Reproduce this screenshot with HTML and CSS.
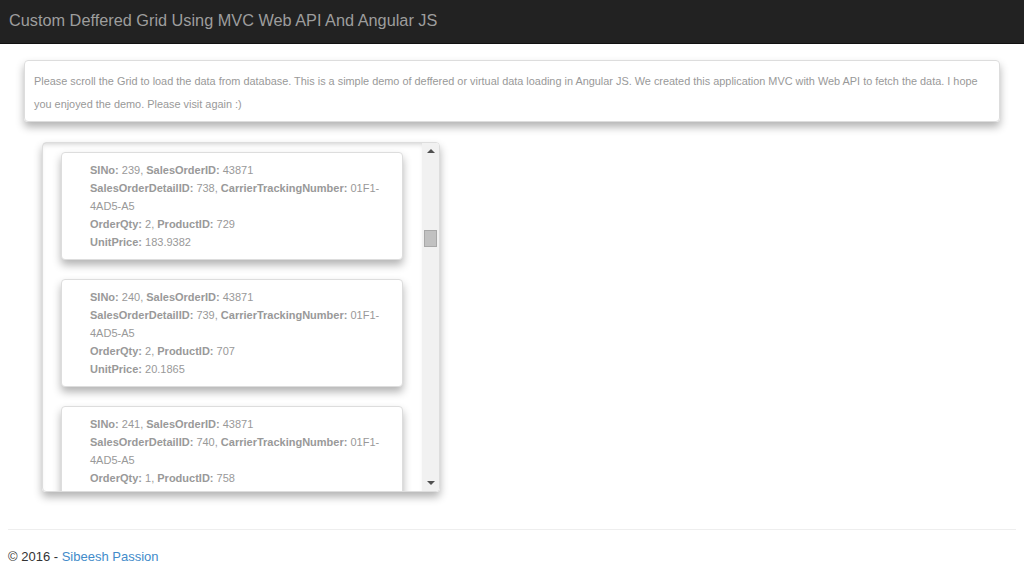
FILE: index.html
```html
<!DOCTYPE html>
<html>
  <head>
    <title>Custom Deffered Grid</title>
    <link rel="stylesheet" href="styles.css">
  </head>
  <body>
    <div class="navbar">
      <span class="brand">Custom Deffered Grid Using MVC Web API And Angular JS</span>
    </div>

    <div class="page">
      <div class="intro">
        Please scroll the Grid to load the data from database. This is a simple demo of deffered or virtual data loading in Angular JS. We created this application MVC with Web API to fetch the data. I hope you enjoyed the demo. Please visit again :)
      </div>

      <div class="grid">
        <div class="grid-rows">
          <div class="row-card">
            <p><b>SINo:</b> 239, <b>SalesOrderID:</b> 43871</p>
            <p><b>SalesOrderDetailID:</b> 738, <b>CarrierTrackingNumber:</b> 01F1-4AD5-A5</p>
            <p><b>OrderQty:</b> 2, <b>ProductID:</b> 729</p>
            <p><b>UnitPrice:</b> 183.9382</p>
          </div>
          <div class="row-card">
            <p><b>SINo:</b> 240, <b>SalesOrderID:</b> 43871</p>
            <p><b>SalesOrderDetailID:</b> 739, <b>CarrierTrackingNumber:</b> 01F1-4AD5-A5</p>
            <p><b>OrderQty:</b> 2, <b>ProductID:</b> 707</p>
            <p><b>UnitPrice:</b> 20.1865</p>
          </div>
          <div class="row-card">
            <p><b>SINo:</b> 241, <b>SalesOrderID:</b> 43871</p>
            <p><b>SalesOrderDetailID:</b> 740, <b>CarrierTrackingNumber:</b> 01F1-4AD5-A5</p>
            <p><b>OrderQty:</b> 1, <b>ProductID:</b> 758</p>
            <p><b>UnitPrice:</b> 874.794</p>
          </div>
        </div>
        <div class="scrollbar">
          <span class="arrow arrow-up"></span>
          <div class="track">
            <span class="thumb"></span>
          </div>
          <span class="arrow arrow-down"></span>
        </div>
      </div>
    </div>

    <hr class="footer-line">
    <p class="footer">&copy; 2016 - <a href="#">Sibeesh Passion</a></p>
  </body>
</html>
```

FILE: styles.css
```css
body {
  margin: 0;
  font-family: "Liberation Sans", Arial, sans-serif;
  color: #333;
  background-color: white;
}

.navbar {
  background-color: #222;
  height: 44px;
  display: flex;
  align-items: center;
  padding-left: 9px;
  border-bottom: 1px solid #111;
  box-sizing: border-box;
}

.brand {
  color: #9d9d9d;
  font-size: 16.3px;
  padding-bottom: 2px;
}

.page {
  padding: 16px 24px 0 24px;
}

.intro {
  width: 976px;
  box-sizing: border-box;
  border: 1px solid #ddd;
  border-radius: 4px;
  padding: 9px 9px 5px 9px;
  font-size: 10.9px;
  line-height: 23px;
  color: #999;
  box-shadow: 0 5px 8px rgba(0, 0, 0, 0.3);
}

.grid {
  margin-top: 20px;
  margin-left: 18px;
  width: 398px;
  height: 350px;
  box-sizing: border-box;
  border: 1px solid #ddd;
  border-radius: 4px;
  box-shadow: 0 5px 8px rgba(0, 0, 0, 0.3);
  display: flex;
  overflow: hidden;
}

.grid-rows {
  flex: 1;
  overflow: hidden;
  padding: 9px 19px 0 18px;
  box-shadow: inset 0 4px 6px -4px rgba(0, 0, 0, 0.25);
}

.row-card {
  border: 1px solid #ddd;
  border-radius: 4px;
  padding: 8px 16px 8px 28px;
  margin-bottom: 19px;
  box-shadow: 0 5px 8px rgba(0, 0, 0, 0.3);
  background-color: white;
}

.row-card p {
  margin: 0;
  font-size: 11px;
  line-height: 18px;
  color: #999;
}

.row-card b {
  font-weight: bold;
}

.scrollbar {
  width: 17px;
  background-color: #f1f1f1;
  display: flex;
  flex-direction: column;
  align-items: center;
}

.arrow {
  width: 0;
  height: 0;
  border-left: 4px solid transparent;
  border-right: 4px solid transparent;
  margin: 6px 0;
}

.arrow-up {
  border-bottom: 4px solid #505050;
}

.arrow-down {
  border-top: 4px solid #505050;
}

.track {
  flex: 1;
  width: 100%;
  display: flex;
  justify-content: center;
}

.thumb {
  margin-top: 71px;
  width: 11px;
  height: 15px;
  background-color: #c1c1c1;
  border: 1px solid #a8a8a8;
}

.footer-line {
  margin: 37px 8px 0 8px;
  border: 0;
  border-top: 1px solid #eee;
}

.footer {
  margin: 19px 8px;
  font-size: 13px;
}

.footer a {
  color: #428bca;
  text-decoration: none;
}
```
